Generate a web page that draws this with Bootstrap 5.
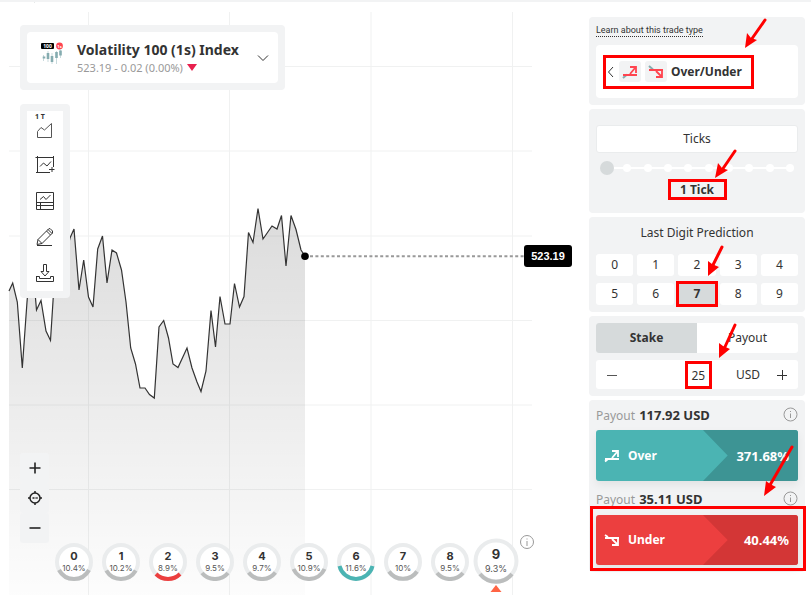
<!DOCTYPE html>
<html lang="en">
<head>
<meta charset="utf-8">
<meta name="viewport" content="width=device-width, initial-scale=1">
<title>Volatility 100 (1s) Index</title>
<link href="https://cdn.jsdelivr.net/npm/bootstrap@5.3.0/dist/css/bootstrap.min.css" rel="stylesheet">
<style>
body{font-family:"Noto Sans","Open Sans",sans-serif;font-size:12px;line-height:18px;color:#333;background:#fff}
button{font:inherit;color:inherit;border:0;background:none;padding:0}
svg{display:block}
.page{min-height:100vh;border-top:2px solid #f2f3f4}
.plot{width:100%;height:100%}
.overlay-col{padding:23px 20px 0}
.asset{background:#f2f3f4;padding:7px;border-radius:4px;width:265px}
.asset button{background:#fff;border-radius:4px;width:100%;height:51px;padding:0 8px 0 14px}
.asset-name{font-size:14px;font-weight:700;line-height:20px}
.asset-price{font-size:11px;line-height:16px;color:#999}
.tools{background:#f2f3f4;padding:7px;border-radius:4px;width:50px;margin-top:14px}
.tools-in{background:#fff;height:180px}
.tools-in button{height:36px}
.tool-first{line-height:12px;font-size:7px;font-weight:700}
.zoomer{width:29px}
.zoomer button{height:30px;background:#f2f3f4;border-radius:3px}
.rings{padding:0 0 12px 35px;margin-top:-5px;gap:9px;height:60px;font-family:Inter,sans-serif}
.rings .last-ring{margin-left:-5px}
.ring-info{margin:-4px 0 0 -8px}
.num{font-size:11px;font-weight:700;text-anchor:middle;fill:#333}
.pct{font-size:8px;text-anchor:middle;fill:#555}
.last-ring .num{font-size:13px}
.last-ring .pct{font-size:9px}
.track-ring{fill:#fff;stroke:#eaeced;stroke-width:4}
.arc{fill:none;stroke:#bbbdbd;stroke-width:4}
.arc-low{stroke:#ec3f3f}
.arc-high{stroke:#4bb4b3}
.side{width:216px;margin-right:6px;padding-top:15px}
.panel{background:#f2f3f4;border-radius:4px;padding:7px;margin-bottom:4px}
.learn{font-family:Roboto,sans-serif;font-size:9px;line-height:12px;color:#333;text-decoration:none;border-bottom:1px dotted #333}
.trade{background:#fff;border-radius:4px;height:53px}
.marked{outline:3px solid #f00;outline-offset:-3px}
.trade button{width:151px;height:34px;margin-left:7px;padding-left:4px;font-weight:700}
.tile{background:#f2f3f4;border-radius:3px;width:22px;height:21px}
.ticks{background:#fff;border:1px solid #eaeced;border-radius:3px;height:28px}
.slide{height:14px;margin:8px 0 4px}
.dots{left:7px;right:4px;top:3px;height:8px}
.dots i{width:8px;height:8px;border-radius:50%;background:#fff}
.rail{left:10px;right:8px;top:6px;height:2px;background:#fff}
.slide input{appearance:none;-webkit-appearance:none;background:none;width:100%;height:14px;margin:0;padding:0 0 0 4px}
.slide input::-webkit-slider-thumb{-webkit-appearance:none;width:14px;height:14px;border-radius:50%;background:#d6dadb;border:0}
.tick-val{width:59px;height:21px;font-weight:700;line-height:21px;margin-bottom:6px}
.digit-title{margin-bottom:12px}
.digits{display:grid;grid-template-columns:repeat(5,1fr);gap:7px 4px}
.digits button{background:#fff;border-radius:3px;height:22px}
.digits .picked{background:#d6dadb;font-weight:700;outline:3px solid #f00;outline-offset:-1px;border-radius:0}
.tabs{background:#fff;border-radius:3px;height:30px;overflow:hidden}
.tabs .sel{background:#d6dadb;font-weight:700}
.amount{background:#fff;border-radius:3px;height:29px;margin-top:7px;padding:0 10px}
.amount input{width:27px;height:28px;border:3px solid #f00;text-align:center;font:inherit;color:#333;padding:2px 0 0;background:#fff}
.pay{height:23px;line-height:17px}
.pay span{color:#999}
.pay b,.rate{font-size:13px}
.pay-next{height:34px;padding-top:10px}
.buy{height:51px;border-radius:3px;color:#fff;font-weight:700;box-shadow:0 4px 8px #0001;overflow:hidden}
.buy:hover{color:#fff}
.up{background:#4bb4b3}
.buy .tip{width:95px;clip-path:polygon(0 0,100% 0,100% 100%,0 100%,26% 50%)}
.up .tip{background:#3d9494}
.down{background:#ec3f3f;height:50px}
.down .tip{background:#d33636}
.buy .in{padding:0 9px 0 8px}
.frame{position:absolute;top:-9px;bottom:-6px;left:-6px;right:-8px;border:3px solid #f00;pointer-events:none}
.arrows{pointer-events:none;overflow:visible}
</style>
<script src="https://cdn.jsdelivr.net/npm/bootstrap@5.3.0/dist/js/bootstrap.bundle.min.js"></script>
</head>
<body>
<div class="page d-flex">
<main class="position-relative flex-grow-1 d-flex flex-column">
  <svg class="plot position-absolute top-0 start-0" viewBox="0 2 589 596" preserveAspectRatio="xMinYMin meet" aria-hidden="true">
    <defs><linearGradient id="fade" x1="0" y1="208" x2="0" y2="595" gradientUnits="userSpaceOnUse"><stop offset="0" stop-color="#000" stop-opacity=".14"/><stop offset="1" stop-color="#000" stop-opacity=".01"/></linearGradient></defs>
    <path d="M88.500 12V595M229.500 12V595M371 12V595M512.500 12V595M9 66.500H532M9 151H532M9 236H532M9 320.500H532M9 405H532M9 489.500H532" stroke="#f0f1f1" fill="none"/>
    <path fill="url(#fade)" d="M9 291L12.700 283 17.300 302 22.300 368 27 302 31.500 250 36.500 310 41 300.500 46 331 50.500 340.500 55 270 60 250 65 262 70 238 74 229 79 290 83.700 260 88.500 297 93 307 97.700 249 102.500 236 107 283 112 250 116.500 253 121.500 270 126 302 130.700 348 135.500 364 140 388 145 388 149.500 394.500 154.300 398 159 327 163.700 320.500 168.500 338 173 364 178 367.500 187 348 192 368 197 382 201 391.500 206 371 211 310.500 215.500 347 220 296.500 225 324 230 324 234.500 283.500 239.500 307 244 296.500 248.500 232.500 253 242.500 258 208.500 263 239 272 226 277 229 281.500 215.500 286 266 291 215.500 296 229.500 301 250 305 256V595H9Z"/>
    <path fill="none" stroke="#333" stroke-width="1.200" d="M9 291L12.700 283 17.300 302 22.300 368 27 302 31.500 250 36.500 310 41 300.500 46 331 50.500 340.500 55 270 60 250 65 262 70 238 74 229 79 290 83.700 260 88.500 297 93 307 97.700 249 102.500 236 107 283 112 250 116.500 253 121.500 270 126 302 130.700 348 135.500 364 140 388 145 388 149.500 394.500 154.300 398 159 327 163.700 320.500 168.500 338 173 364 178 367.500 187 348 192 368 197 382 201 391.500 206 371 211 310.500 215.500 347 220 296.500 225 324 230 324 234.500 283.500 239.500 307 244 296.500 248.500 232.500 253 242.500 258 208.500 263 239 272 226 277 229 281.500 215.500 286 266 291 215.500 296 229.500 301 250 305 256"/>
    <path d="M310 256.300H524" stroke="#999" stroke-width="2" stroke-dasharray="3 2.400"/>
    <circle cx="305" cy="256.300" r="3.800"/>
    <rect x="524" y="245" width="48" height="22" rx="3"/>
    <text x="548" y="260" fill="#fff" font-family="Liberation Sans" font-size="11" font-weight="700" text-anchor="middle">523.19</text>
    <path d="M34.500 0V3" stroke="#e6e9e9"/>
  </svg>
  <div class="overlay-col position-relative d-flex flex-column flex-grow-1">
    <div class="asset"><button class="d-flex align-items-center text-start">
      <svg width="24" height="24" viewBox="0 0 24 24" class="mb-2"><rect x="0" y="1" width="13" height="6" rx="1" fill="#000"/><text x="6.500" y="6" font-size="5" font-weight="700" fill="#fff" text-anchor="middle">100</text><circle cx="18.500" cy="4" r="3.400" fill="#ff444f"/><text x="18.500" y="6" font-size="4" font-weight="700" fill="#fff" text-anchor="middle">1s</text><path d="M2.500 13v6M7 9v11M11 11v11M15.500 9v13M19.500 7v9" stroke="#c9dadd"/><path d="M3 14.500v2M7 11v6M11 14v6M15.500 10v6M19.500 8.500v5" stroke="#85acb0" stroke-width="2.600"/></svg>
      <span class="ms-2 ps-1 flex-grow-1"><span class="asset-name d-block">Volatility 100 (1s) Index</span><span class="asset-price d-flex align-items-center">523.19 - 0.02 (0.00%)<svg width="10" height="8" class="ms-1"><path d="M0 0H10L5 7Z" fill="#e8204e"/></svg></span></span>
      <svg width="14" height="10" fill="none" stroke="#333"><path d="M2 2.500L7 7.500 12 2.500"/></svg>
    </button></div>
    <div class="tools"><div class="tools-in d-flex flex-column align-items-stretch">
      <button class="d-flex flex-column align-items-center" aria-label="Chart type"><span class="tool-first align-self-start ps-2">1 T</span><svg width="18" height="18" fill="none" stroke="#555"><path d="M1.500 14.500V8.500L5 4.500 8.500 7 15.500 .500V14.500Z"/></svg></button>
      <button class="d-flex align-items-center justify-content-center" aria-label="Indicators"><svg width="20" height="20" fill="none" stroke="#333"><path d="M2.500 1V18M0.500 2.500H18.500M18.500 1V12M1 17.500H15M5 11.500L8.500 8 12 11 16 6.500M17 12V17M14 14.500H19.500"/></svg></button>
      <button class="d-flex align-items-center justify-content-center" aria-label="Templates"><svg width="20" height="20" fill="none" stroke="#333"><path d="M1.500 1.500H18.500V18.500H1.500ZM1.500 11.500H18.500M1.500 14.500H18.500M5.500 11.500V18M5 8.500L8.500 5.500 11 8.500 15.500 4"/></svg></button>
      <button class="d-flex align-items-center justify-content-center" aria-label="Drawing tools"><svg width="20" height="20" fill="none" stroke="#333"><path d="M2 17.500L3 12.500 13.500 2 15 1.500 17.500 4V6L7 16.500ZM11.500 4L15.500 8M3 12.500L7 16.500M13 2.500L17 6.500M2 18.500H17"/></svg></button>
      <button class="d-flex align-items-center justify-content-center" aria-label="Download"><svg width="20" height="20" fill="none" stroke="#333"><path d="M8.500 1.500H11.500V8.500H14L10 13 6 8.500H8.500ZM1.500 13V18.500H18.500V13.500H15.500V15.500H4.500V13.500H1.500"/></svg></button>
    </div></div>
    <div class="zoomer d-flex flex-column mt-auto">
      <button class="d-flex align-items-center justify-content-center" aria-label="Zoom in"><svg width="12" height="12" stroke="#222" stroke-width="1.600"><path d="M6 .500V11.500M.500 6H11.500"/></svg></button>
      <button class="d-flex align-items-center justify-content-center" aria-label="Recenter"><svg width="14" height="14" stroke="#222" stroke-width="1.500" fill="none"><circle cx="7" cy="7" r="5"/><path d="M7 0V2M7 12V14M0 7H2M12 7H14M4.500 7H6M6.500 7H7.500M8.200 7H9.700"/></svg></button>
      <button class="d-flex align-items-center justify-content-center" aria-label="Zoom out"><svg width="12" height="12" stroke="#222" stroke-width="1.600"><path d="M.500 6H11.500"/></svg></button>
    </div>
    <div class="rings d-flex align-items-center">
      <svg width="38" height="38"><circle class="track-ring" cx="19" cy="19" r="17"/><path class="arc" d="M4 27A17 17 0 0 0 34 27"/><text class="num" x="19" y="17">0</text><text class="pct" x="19" y="28">10.4%</text></svg>
      <svg width="38" height="38"><circle class="track-ring" cx="19" cy="19" r="17"/><path class="arc" d="M4.300 27.500A17 17 0 0 0 33.700 27.500"/><text class="num" x="19" y="17">1</text><text class="pct" x="19" y="28">10.2%</text></svg>
      <svg width="38" height="38"><circle class="track-ring" cx="19" cy="19" r="17"/><path class="arc arc-low" d="M7 31A17 17 0 0 0 31 31"/><text class="num" x="19" y="17">2</text><text class="pct" x="19" y="28">8.9%</text></svg>
      <svg width="38" height="38"><circle class="track-ring" cx="19" cy="19" r="17"/><path class="arc" d="M6 30A17 17 0 0 0 32 30"/><text class="num" x="19" y="17">3</text><text class="pct" x="19" y="28">9.5%</text></svg>
      <svg width="38" height="38"><circle class="track-ring" cx="19" cy="19" r="17"/><path class="arc" d="M5.600 29.500A17 17 0 0 0 32.400 29.500"/><text class="num" x="19" y="17">4</text><text class="pct" x="19" y="28">9.7%</text></svg>
      <svg width="38" height="38"><circle class="track-ring" cx="19" cy="19" r="17"/><path class="arc" d="M3.500 26A17 17 0 0 0 34.500 26"/><text class="num" x="19" y="17">5</text><text class="pct" x="19" y="28">10.9%</text></svg>
      <svg width="38" height="38"><circle class="track-ring" cx="19" cy="19" r="17"/><path class="arc arc-high" d="M2.500 23A17 17 0 0 0 35.500 23"/><text class="num" x="19" y="17">6</text><text class="pct" x="19" y="28">11.6%</text></svg>
      <svg width="38" height="38"><circle class="track-ring" cx="19" cy="19" r="17"/><path class="arc" d="M5 28.500A17 17 0 0 0 33 28.500"/><text class="num" x="19" y="17">7</text><text class="pct" x="19" y="28">10%</text></svg>
      <svg width="38" height="38"><circle class="track-ring" cx="19" cy="19" r="17"/><path class="arc" d="M6 30A17 17 0 0 0 32 30"/><text class="num" x="19" y="17">8</text><text class="pct" x="19" y="28">9.5%</text></svg>
      <svg class="last-ring overflow-visible" width="46" height="46"><circle class="track-ring" cx="23" cy="22" r="20.500"/><path class="arc" d="M7 35A20.500 20.500 0 0 0 39 35"/><text class="num" x="23" y="20">9</text><text class="pct" x="23" y="33">9.3%</text><path d="M23 46L28.500 53H17.500Z" fill="#ff6444"/></svg>
      <button class="ring-info align-self-start" aria-label="Digit statistics information"><svg width="16" height="16" fill="none" stroke="#999"><circle cx="7" cy="8" r="6.500"/><path d="M7 7V12M7 4.500V5.500"/></svg></button>
    </div>
  </div>
</main>

<aside class="side position-relative flex-shrink-0">
  <section class="panel">
    <div class="d-flex mb-2"><a href="#" class="learn">Learn about this trade type</a></div>
    <div class="trade d-flex align-items-center"><button class="marked d-flex align-items-center">
      <svg width="8" height="12" fill="none" stroke="#333"><path d="M6 1L1.500 6 6 11"/></svg>
      <span class="tile d-flex align-items-center justify-content-center ms-1"><svg width="16" height="14" fill="none"><path d="M1 13L5 9.500" stroke="#85acb0" stroke-width="2"/><path d="M1 10H15M8 9L13 3M8 2H14V8" stroke="#ff444f" stroke-width="1.800"/></svg></span>
      <span class="tile d-flex align-items-center justify-content-center ms-1"><svg width="16" height="14" fill="none"><path d="M1 1L5 4.500" stroke="#85acb0" stroke-width="2"/><path d="M1 5H15M8 6L13 11M14 6V12H8" stroke="#ff444f" stroke-width="1.800"/></svg></span>
      <span class="ms-1">Over/Under</span>
    </button></div>
  </section>

  <section class="panel pt-3">
    <button class="ticks w-100">Ticks</button>
    <div class="slide position-relative"><div class="rail position-absolute"></div><div class="dots position-absolute d-flex justify-content-between"><i></i><i></i><i></i><i></i><i></i><i></i><i></i><i></i><i></i><i></i></div><input class="position-relative d-block" type="range" min="1" max="10" value="1" aria-label="Number of ticks"></div>
    <div class="tick-val marked text-center mx-auto">1 Tick</div>
  </section>

  <section class="panel">
    <div class="digit-title text-center">Last Digit Prediction</div>
    <div class="digits"><button>0</button><button>1</button><button>2</button><button>3</button><button>4</button><button>5</button><button>6</button><button class="picked">7</button><button>8</button><button>9</button></div>
  </section>

  <section class="panel">
    <div class="tabs d-flex"><button class="sel w-50">Stake</button><button class="w-50">Payout</button></div>
    <div class="amount d-flex align-items-center"><button aria-label="Decrease stake"><svg width="12" height="12" stroke="#555"><path d="M1 6.500H11"/></svg></button><input class="ms-auto me-4" type="text" value="25" aria-label="Stake amount"><span>USD</span><button class="ms-3" aria-label="Increase stake"><svg width="12" height="12" stroke="#333"><path d="M1 6.500H11M6.500 1V11"/></svg></button></div>
  </section>

  <section class="panel">
    <div class="pay d-flex"><span>Payout</span><b class="ms-1 flex-grow-1">117.92 USD</b><svg width="15" height="15" fill="none" stroke="#999"><circle cx="7.500" cy="7.500" r="6.500"/><path d="M7.500 6.500V11M7.500 4V5"/></svg></div>
    <button class="buy up w-100 position-relative d-flex justify-content-end"><span class="tip h-100"></span><span class="in position-absolute top-0 start-0 w-100 h-100 d-flex align-items-center"><svg width="16" height="14" fill="none" stroke="#fff" stroke-width="1.800"><path d="M1 12.500L4 10M1 10H15M8 9L13 3M8 2H14V8"/></svg><span class="ms-2 flex-grow-1 text-start">Over</span><span class="rate">371.68%</span></span></button>
    <div class="pay pay-next d-flex"><span>Payout</span><b class="ms-1 flex-grow-1">35.11 USD</b><svg width="15" height="15" fill="none" stroke="#999"><circle cx="7.500" cy="7.500" r="6.500"/><path d="M7.500 6.500V11M7.500 4V5"/></svg></div>
    <div class="position-relative"><button class="buy down w-100 position-relative d-flex justify-content-end"><span class="tip h-100"></span><span class="in position-absolute top-0 start-0 w-100 h-100 d-flex align-items-center"><svg width="16" height="14" fill="none" stroke="#fff" stroke-width="1.800"><path d="M1 2L4 4M1 5H15M8 6L13 11M14 6V12H8"/></svg><span class="ms-2 flex-grow-1 text-start">Under</span><span class="rate">40.44%</span></span></button><div class="frame"></div></div>
  </section>
  <svg class="arrows position-absolute top-0 start-0" width="216" height="500" viewBox="589 2 216 500" aria-hidden="true"><g stroke="#f00" stroke-width="3" stroke-linecap="round"><path d="M765 20L751 40M735 151L722 170M722 247L712 267M735 325L724 349M792 447L770 485"/></g><g fill="#f00"><path d="M745 48L747 33 751 38 757 40ZM715 178L718 163 722 168 728 170ZM708 276L708 261 712 264 719 267ZM719 358L719 343 723 346 730 349ZM764 496L766 481 770 484 776 487Z"/></g></svg>
</aside>
</div>
</body>
</html>
